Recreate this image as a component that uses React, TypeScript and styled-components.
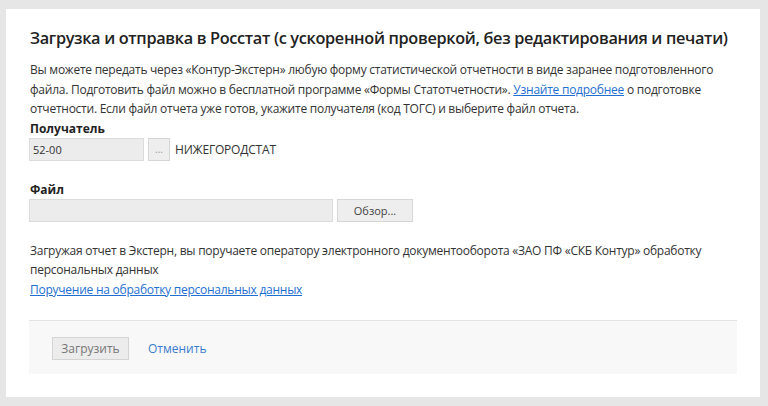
import React from "react";
import styled, { createGlobalStyle } from "styled-components";

const Global = createGlobalStyle`
  html, body { margin: 0; padding: 0; background: #e6e6e6; }
  body { font-family: "Open Sans", "Noto Sans", Arial, sans-serif; color: #333; }
  * { box-sizing: border-box; }
`;

const Page = styled.div`
  padding: 9px 8px 9px 6px;
  height: 406px;
`;

const Panel = styled.div`
  background: #fff;
  width: 754px;
  height: 388px;
  padding: 17px 23px 23px 23px;
  display: flex;
  flex-direction: column;
`;

const Title = styled.h1`
  margin: 0 0 0 1px;
  font-size: 16.3px;
  line-height: 24px;
  font-weight: 600;
  color: #222;
  letter-spacing: -0.33px;
  white-space: nowrap;
`;

const Para = styled.p<{ $top?: number }>`
  margin: ${(p) => p.$top ?? 0}px 0 0 1px;
  font-size: 12px;
  line-height: 19.5px;
  letter-spacing: -0.25px;
  color: #333;
`;

const Link = styled.a`
  color: #1e6fd0;
  text-decoration: underline;
  cursor: pointer;
`;

const Label = styled.div<{ $top: number }>`
  margin: ${(p) => p.$top}px 0 0 1px;
  font-size: 12px;
  line-height: 16px;
  font-weight: 700;
  color: #222;
`;

const Row = styled.div`
  display: flex;
  align-items: center;
  gap: 4px;
  margin-top: 1px;
`;

const Input = styled.div<{ $w: number }>`
  width: ${(p) => p.$w}px;
  height: 23px;
  background: #ececec;
  border: 1px solid #dcdcdc;
  font-size: 11px;
  line-height: 21px;
  padding: 0 3px;
  color: #333;
`;

const Button = styled.button<{ $w: number }>`
  width: ${(p) => p.$w}px;
  height: 23px;
  background: #eeeeee;
  border: 1px solid #d6d6d6;
  font-family: inherit;
  font-size: 11px;
  color: #444;
  padding: 0;
  cursor: pointer;
`;

const Dots = styled(Button)`
  color: #999;
  font-size: 10px;
`;

const Recipient = styled.span`
  font-size: 12px;
  letter-spacing: -0.2px;
  color: #333;
  margin-left: 1px;
`;

const Spacer = styled.div`
  flex: 1;
`;

const Footer = styled.div`
  border-top: 1px solid #e3e3e3;
  background: #f8f8f8;
  height: 54px;
  padding: 16px 0 0 23px;
  display: flex;
  align-items: flex-start;
  gap: 19px;
`;

const Submit = styled.button`
  width: 77px;
  height: 23px;
  background: #ececec;
  border: 1px solid #d4d4d4;
  font-family: inherit;
  font-size: 12px;
  color: #777;
  padding: 0;
`;

const Cancel = styled.a`
  font-size: 12px;
  line-height: 23px;
  color: #3a7bcc;
  cursor: pointer;
`;

export default function App() {
  return (
    <>
      <Global />
      <Page>
        <Panel>
          <Title>Загрузка и отправка в Росстат (с ускоренной проверкой, без редактирования и печати)</Title>
          <Para $top={10}>
            Вы можете передать через «Контур-Экстерн» любую форму статистической отчетности в виде заранее подготовленного
            файла. Подготовить файл можно в бесплатной программе «Формы Статотчетности». <Link>Узнайте подробнее</Link> о подготовке
            отчетности. Если файл отчета уже готов, укажите получателя (код ТОГС) и выберите файл отчета.
          </Para>
          <Label $top={2}>Получатель</Label>
          <Row>
            <Input $w={115}>52-00</Input>
            <Dots $w={22}>...</Dots>
            <Recipient>НИЖЕГОРОДСТАТ</Recipient>
          </Row>
          <Label $top={21}>Файл</Label>
          <Row>
            <Input $w={304} />
            <Button $w={76}>Обзор...</Button>
          </Row>
          <Para $top={19}>
            Загружая отчет в Экстерн, вы поручаете оператору электронного документооборота «ЗАО ПФ «СКБ Контур» обработку
            персональных данных
            <br />
            <Link>Поручение на обработку персональных данных</Link>
          </Para>
          <Spacer />
          <Footer>
            <Submit>Загрузить</Submit>
            <Cancel>Отменить</Cancel>
          </Footer>
        </Panel>
      </Page>
    </>
  );
}
